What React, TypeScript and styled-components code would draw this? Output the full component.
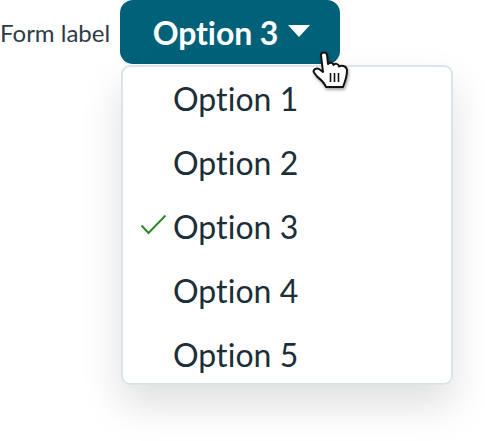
import styled, { createGlobalStyle } from 'styled-components';

const GlobalStyle = createGlobalStyle`
html, body {
  margin: 0;
  background: #fff;
  font-family: Lato, "Open Sans", sans-serif;
  overflow: hidden;
}
`;

const Page = styled.div`
  width: 485px;
  height: 441px;
  display: flex;
  align-items: flex-start;
  color: #1c2f38;
`;

const FormLabel = styled.label`
  font-size: 24px;
  line-height: 66px;
  width: 120px;
  flex: none;
  color: #2d3b45;
`;

const Field = styled.div`
  position: relative;
  display: flex;
  flex-direction: column;
  align-items: flex-start;
`;

const Trigger = styled.button`
  width: 220px;
  height: 64px;
  border: 0;
  border-radius: 13px;
  background: #016179;
  color: #fff;
  font: 700 32px Lato, sans-serif;
  letter-spacing: -0.1px;
  display: flex;
  align-items: center;
  justify-content: center;
  gap: 10px;
  padding: 0 0 0 3px;
`;

const Caret = styled.span`
  width: 0;
  height: 0;
  border-left: 11px solid transparent;
  border-right: 11px solid transparent;
  border-top: 12px solid #fff;
  margin-bottom: 2px;
`;

const Menu = styled.ul`
  list-style: none;
  margin: 1px 0 0 1px;
  padding: 0;
  width: 332px;
  background: #fff;
  border-radius: 9px;
  box-shadow: inset 0 0 0 2px #d9e5e8, 0 20px 40px rgba(0, 0, 0, 0.13);
`;

const Item = styled.li`
  position: relative;
  height: 64px;
  padding-left: 52px;
  font-size: 32px;
  line-height: 67px;
  letter-spacing: 0.05px;
  color: #1c2f38;
`;

const Check = styled.svg`
  position: absolute;
  left: 19px;
  top: 21px;
`;

const Pointer = styled.svg`
  position: absolute;
  left: 192px;
  top: 50px;
  filter: drop-shadow(1px 2px 1.5px rgba(0, 0, 0, 0.35));
`;

const options = ['Option 1', 'Option 2', 'Option 3', 'Option 4', 'Option 5'];
const selected = 'Option 3';

export default function App() {
  return (
    <Page>
      <GlobalStyle />
      <FormLabel>Form label</FormLabel>
      <Field>
        <Trigger>
          {selected}
          <Caret />
        </Trigger>
        <Menu>
          {options.map((option) => (
            <Item key={option}>
              {option === selected && (
                <Check width="27" height="22" viewBox="0 0 27 22">
                  <path d="M1.5 11.5 L8.5 19 L25.5 1.5" fill="none" stroke="#2f8527" strokeWidth="1.9" />
                </Check>
              )}
              {option}
            </Item>
          ))}
        </Menu>
        <Pointer width="37" height="40" viewBox="0 0 37 40">
          <path
            d="M9 5 C9 1.5 15 1.5 15 5 L16 14 C18 12 21 12.5 21.5 15 C23 13 26.5 13.5 27 16.5 C29 15 34.5 15.5 35 20 C35 27 33 32 31 37 L14 37 C12 32 8 29 5 26.5 L2 22.5 C0.5 19.5 4.5 17.5 7 19 L11 22 Z"
            fill="#fff"
            stroke="#111"
            strokeWidth="2"
            strokeLinejoin="round"
          />
          <path d="M18.5 23 V32 M22.5 23 V32 M26.5 23 V32" stroke="#111" strokeWidth="1.6" fill="none" />
        </Pointer>
      </Field>
    </Page>
  );
}
